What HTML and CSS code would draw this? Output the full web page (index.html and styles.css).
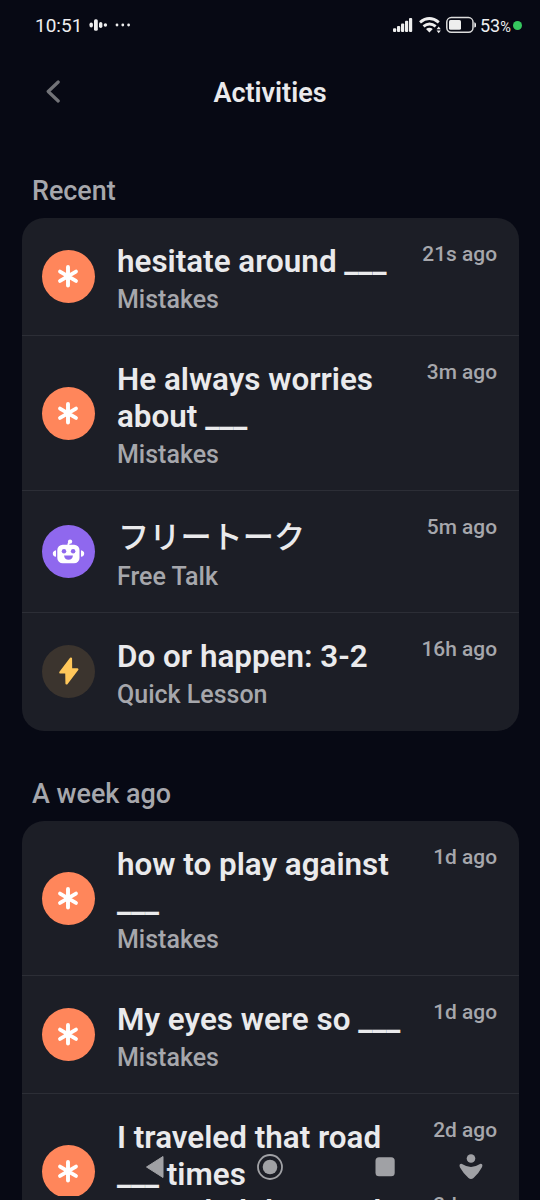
FILE: index.html
```html
<!DOCTYPE html>
<html lang="en">
<head>
<meta charset="utf-8">
<title>Activities</title>
<link rel="stylesheet" href="styles.css">
</head>
<body>
<svg class="defs" width="0" height="0">
  <symbol id="star" viewBox="0 0 54 54"><path d="M27 17.900v18.700M18.900 22.500l16.200 9.500M35.100 22.500l-16.200 9.500" fill="none" stroke="#fff" stroke-width="4" stroke-linecap="round"/></symbol>
</svg>
<div class="screen">
  <header class="status">
    <span class="clock">10:51</span>
    <svg class="wave" width="42" height="16" viewBox="0 0 42 16" fill="#eee"><rect x="0.5" y="5.500" width="3.400" height="5" rx="1.700"/><rect x="5" y="2.200" width="3.800" height="11.600" rx="1.500"/><rect x="10" y="5" width="3.400" height="6" rx="1.700"/><circle cx="16.400" cy="8" r="1.700"/><circle cx="28" cy="8" r="1.400"/><circle cx="33.800" cy="8" r="1.400"/><circle cx="39.600" cy="8" r="1.400"/></svg>
    <svg class="signals" width="84" height="20" viewBox="392 15 84 20" fill="#eee"><rect x="393" y="28.300" width="3.200" height="3.700" rx="1"/><rect x="397" y="26" width="3.200" height="6" rx="1"/><rect x="401" y="23.500" width="3.200" height="8.500" rx="1"/><rect x="405" y="20.800" width="3.200" height="11.200" rx="1"/><rect x="409" y="18" width="3.200" height="14" rx="1"/>
      <path d="M420 22.400q9.300-7.600 18.800 0M423.500 26.300q6-4.800 12.200 0" fill="none" stroke="#eee" stroke-width="2.900"/><path d="M426 28.900q3.400-2.200 6.800 0l-3.400 3.600zM436.600 29.200l2.100-2.800 2.100 2.800zM436.600 30.400h4.200l-2.100 2.800z"/>
      <rect x="446.800" y="17.600" width="26.200" height="14.600" rx="4.500" fill="none" stroke="#ddd" stroke-width="1.500"/><rect x="449" y="20" width="12" height="9.700" rx="1.500"/><path d="M474.300 22.200q2 .4 2 2.700t-2 2.700z"/></svg>
    <span class="battery">53<small>%</small></span>
    <i class="privacy"></i>
  </header>
  <div class="topbar">
    <svg class="back" width="16" height="24" viewBox="0 0 16 24"><path d="M13.200 2L3.200 11.500l10 9.500" fill="none" stroke="#727378" stroke-width="3.200" stroke-linecap="round" stroke-linejoin="round"/></svg>
    <h1>Activities</h1>
  </div>
  <main>
    <h2>Recent</h2>
    <section class="card">
      <article class="row"><svg class="icon orange"><use href="#star"/></svg><div class="text"><h3>hesitate around ___</h3><p>Mistakes</p></div><time>21s ago</time></article>
      <article class="row"><svg class="icon orange"><use href="#star"/></svg><div class="text"><h3>He always worries<br>about ___</h3><p>Mistakes</p></div><time>3m ago</time></article>
      <article class="row"><svg class="icon purple" viewBox="0 0 54 54"><g fill="#fff"><rect x="15.600" y="20" width="22.600" height="19" rx="5.500"/><path d="M14.300 25.600v6.800Q11 31.800 11 29t3.300-3.400M39.700 25.600v6.800Q43 31.800 43 29t-3.300-3.400"/><circle cx="28.600" cy="17" r="2.200"/></g><path d="M28.200 17.500q-1.500 1-1.500 4" fill="none" stroke="#fff" stroke-width="2"/><circle cx="22.400" cy="26.800" r="2.300" fill="#8f68ee"/><circle cx="31.700" cy="26.800" r="2.300" fill="#8f68ee"/><path d="M22.500 31h9q-.5 4.400-4.500 4.400T22.500 31z" fill="#8f68ee"/></svg><div class="text"><h3 class="ja" lang="ja">フリートーク</h3><p>Free Talk</p></div><time>5m ago</time></article>
      <article class="row"><svg class="icon brown" viewBox="0 0 54 54"><path d="M29.500 13.800L18.700 28h6.100L25 39.200l11-14.400h-6.400z" fill="#ffc75a" stroke="#ffc75a" stroke-width="2.300" stroke-linejoin="round"/></svg><div class="text"><h3>Do or happen: 3-2</h3><p>Quick Lesson</p></div><time>16h ago</time></article>
    </section>
    <h2 class="later">A week ago</h2>
    <section class="card">
      <article class="row"><svg class="icon orange"><use href="#star"/></svg><div class="text"><h3>how to play against<br>___</h3><p>Mistakes</p></div><time>1d ago</time></article>
      <article class="row"><svg class="icon orange"><use href="#star"/></svg><div class="text"><h3>My eyes were so ___</h3><p>Mistakes</p></div><time>1d ago</time></article>
      <article class="row last"><svg class="icon orange"><use href="#star"/></svg><div class="text"><h3>I traveled that road<br>___ times</h3></div><time>2d ago</time></article>
    </section>
  </main>
  <div class="edge"><h3>I traveled that road</h3><time>2d ago</time></div>
  <svg class="nav" width="540" height="66" viewBox="0 1134 540 66" fill="#a0a1a5"><path d="M146.500 1167l16.500-10.500v21z" stroke="#a0a1a5" stroke-width="1" stroke-linejoin="round"/><circle cx="270" cy="1167" r="12" fill="none" stroke="#a0a1a5" stroke-width="1.800"/><circle cx="270" cy="1167" r="7.300"/><rect x="375.500" y="1157.300" width="19.200" height="19" rx="3.500"/><circle cx="471" cy="1158.500" r="4.300"/><path d="M461.500 1163.800Q471 1170 480.500 1163.800Q483.500 1164 481.800 1167.500Q479 1173 473.500 1178Q471 1180 468.500 1178Q463 1173 460 1167.500Q458.500 1164 461.500 1163.800z"/></svg>
</div>
</body>
</html>
```
FILE: styles.css
```css
* { box-sizing: border-box; margin: 0; padding: 0; }
body { background: #070914; font-family: Roboto, "Noto Sans CJK JP", sans-serif; font-weight: 500; color: #eaeaec; }
.defs { position: absolute; }
.screen { position: relative; width: 540px; height: 1200px; overflow: hidden; }
.status { display: flex; align-items: center; height: 50px; padding-left: 35px; color: #eeeef0; }
.clock { width: 54px; padding-top: 1px; font-size: 19px; line-height: 52px; font-weight: 400; }
.signals { margin-left: 261px; }
.battery { margin-left: 4px; width: 33px; padding-top: 1px; font-size: 18px; font-weight: 400; white-space: nowrap; }
.battery small { font-size: 14.5px; }
.privacy { width: 9px; height: 9px; border-radius: 50%; background: #36c75e; }
.topbar { display: grid; grid-template-columns: 46px 1fr 46px; align-items: center; height: 84px; }
.back { margin-left: 45px; }
h1 { padding-top: 2px; text-align: center; font-size: 27px; line-height: 30px; font-weight: 600; }
main { padding: 40px 21px 0 21.5px; }
h2 { padding: 1px 0 0 10.5px; height: 44px; font-size: 26.9px; line-height: 32px; font-weight: 500; color: #a6a7ac; }
.later { margin-top: 46px; height: 44px; }
.card { border-radius: 22px; background: #1c1e26; overflow: hidden; }
.row { display: flex; align-items: center; padding: 25px 22px 21px 20.5px; border-bottom: 1px solid #2c2e36; }
.row:last-child { border-bottom: 0; padding-bottom: 22px; }
.icon { flex: none; width: 53px; height: 53px; margin-bottom: 4px; border-radius: 50%; }
.icon use { transform: translate(-0.5px, -0.5px); }
.orange { background: #ff865b; }
.purple { background: #8f68ee; }
.brown { background: #3b342e; }
.text { flex: 1; margin-left: 22px; }
h3 { font-size: 31.4px; line-height: 37px; font-weight: 600; white-space: nowrap; }
.ja { padding: 2px 0 0 1px; line-height: 39px; font-size: 31.2px; font-weight: 500; }
p { margin-top: 5px; font-size: 25px; line-height: 29px; color: #a6a7ac; }
time { align-self: flex-start; margin-top: -1px; font-size: 20.9px; line-height: 25px; color: #a6a7ac; white-space: nowrap; }
.last { height: 155px; }
.last .text { align-self: flex-start; }
.edge { position: absolute; left: 21.5px; right: 21px; bottom: 0; height: 4px; display: flex; align-items: flex-start; justify-content: space-between; padding: 0 22px 0 95.5px; overflow: hidden; background: #1c1e26; }
.edge h3 { margin-top: -3px; }
.edge time { margin-top: -3px; }
.nav { position: absolute; left: 0; bottom: 0; }
```
